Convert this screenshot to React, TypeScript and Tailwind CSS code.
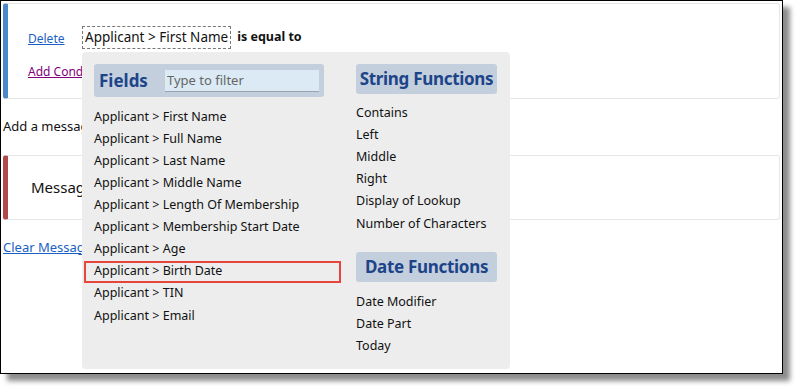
const fields = [
  'Applicant > First Name',
  'Applicant > Full Name',
  'Applicant > Last Name',
  'Applicant > Middle Name',
  'Applicant > Length Of Membership',
  'Applicant > Membership Start Date',
  'Applicant > Age',
  'Applicant > Birth Date',
  'Applicant > TIN',
  'Applicant > Email',
];

const stringFns = ['Contains', 'Left', 'Middle', 'Right', 'Display of Lookup', 'Number of Characters'];
const dateFns = ['Date Modifier', 'Date Part', 'Today'];

const font = { fontFamily: '"Noto Sans", "DejaVu Sans", sans-serif' };

const SectionHeader = ({ title }: { title: string }) => (
  <div className="w-[141px] h-[30px] rounded-[3px] bg-[#c3cfdd] flex items-center justify-center text-[17px] font-bold text-[#1d4488] tracking-[-0.3px]">
    {title}
  </div>
);

const FieldPicker = () => {
  return (
    <div className="absolute left-[81px] top-[51px] w-[428px] h-[317px] rounded-[4px] bg-[#ededed] flex gap-[32px] pl-[12px] pt-[12px]">
      <div className="w-[230px]">
        <div className="h-[33px] rounded-[3px] bg-[#c3cfdd] flex items-center pl-[5px] pr-[5px]">
          <span className="text-[17px] font-bold text-[#1d4488] w-[66px]">Fields</span>
          <input
            placeholder="Type to filter"
            className="w-[154px] h-[22px] bg-[#dbeaf4] border-b border-[#9aa3ab] px-[2px] text-[13px] text-[#333] placeholder:text-[#666] outline-none"
          />
        </div>
        <ul className="mt-[9px] -ml-[10px] text-[12.5px] text-[#111]">
          {fields.map((f) => (
            <li
              key={f}
              className={
                f === 'Applicant > Birth Date'
                  ? 'h-[22.1px] w-[257px] pl-[8px] flex items-center border-2 border-[#e6453d]'
                  : 'h-[22.1px] pl-[10px] flex items-center'
              }
            >
              {f}
            </li>
          ))}
        </ul>
      </div>
      <div className="flex flex-col">
        <SectionHeader title="String Functions" />
        <ul className="mt-[8px] text-[12.5px] text-[#111]">
          {stringFns.map((s) => (
            <li key={s} className="h-[22.2px] flex items-center">
              {s}
            </li>
          ))}
        </ul>
        <div className="mt-[17px]">
          <SectionHeader title="Date Functions" />
        </div>
        <ul className="mt-[9px] text-[12.5px] text-[#111]">
          {dateFns.map((s) => (
            <li key={s} className="h-[22.2px] flex items-center">
              {s}
            </li>
          ))}
        </ul>
      </div>
    </div>
  );
};

export default function App() {
  return (
    <div className="w-[798px] h-[389px] bg-white" style={font}>
      <div className="relative w-[783px] h-[374px] border border-black bg-white shadow-[7px_7px_5px_rgba(0,0,0,0.45)]">
        <div className="pl-[2px] pt-[2px] pr-[2px]">
          <div className="w-[777px] h-[96px] rounded-[3px] border border-[#e6e6e6] border-l-[5px] border-l-[#4a88c8] pl-[20px] pt-[21px]">
            <div className="flex items-center h-[24px]">
              <a href="#" className="mt-[3px] text-[12px] text-[#1a5fc4] underline w-[54px]">
                Delete
              </a>
              <span className="h-[23px] px-[2px] border border-dashed border-[#777] text-[13.5px] text-[#111] flex items-center">
                Applicant &gt; First Name
              </span>
              <span className="ml-[6px] text-[12.5px] font-bold text-[#111]">is equal to</span>
            </div>
            <div className="mt-[9px]">
              <a href="#" className="text-[12px] text-[#800080] underline">
                Add Condition
              </a>
            </div>
          </div>
          <p className="mt-[18px] text-[13px] text-[#111]">Add a message</p>
          <div className="mt-[18px] w-[777px] h-[65px] rounded-[3px] border border-[#e6e6e6] border-l-[5px] border-l-[#b04a4a] pl-[23px] flex items-center">
            <span className="text-[15px] text-[#111]">Message</span>
          </div>
          <a href="#" className="block mt-[18px] text-[13px] text-[#1a5fc4] underline">
            Clear Message
          </a>
        </div>
        <FieldPicker />
      </div>
    </div>
  );
}
